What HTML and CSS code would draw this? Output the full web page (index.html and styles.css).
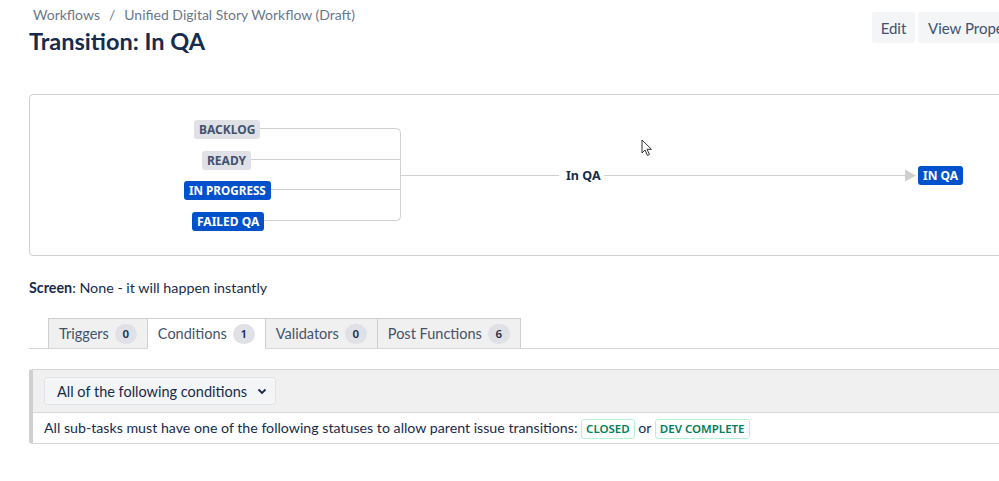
FILE: index.html
```html
<!DOCTYPE html>
<html>
<head>
<meta charset="utf-8">
<link rel="stylesheet" href="styles.css">
</head>
<body>
<div class="page">
  <header class="head">
    <div class="head-left">
      <nav class="crumbs"><a>Workflows</a><span class="sep">/</span><a>Unified Digital Story Workflow (Draft)</a></nav>
      <h1 class="title">Transition: In QA</h1>
    </div>
    <div class="actions">
      <button class="btn">Edit</button>
      <button class="btn">View Properties</button>
    </div>
  </header>

  <section class="diagram">
    <svg class="wires" width="1000" height="162" viewBox="0 0 1000 162">
      <g fill="none" stroke="#d0d0d0" stroke-width="1">
        <path d="M228 34.5 H367.5 Q371.5 34.5 371.5 38.5 V122.5 Q371.5 126.5 367.5 126.5 H230"/>
        <path d="M219 65.5 H371.5"/>
        <path d="M239 95.5 H371.5"/>
        <path d="M371.5 81.5 H530"/>
        <path d="M575 81.5 H877"/>
      </g>
      <polygon points="876,75.5 887,81.5 876,87.5" fill="#cfcfcf"/>
    </svg>
    <span class="loz gray node" style="left:164px;top:25px">BACKLOG</span>
    <span class="loz gray node" style="left:172px;top:56px">READY</span>
    <span class="loz blue node" style="left:154px;top:86px">IN PROGRESS</span>
    <span class="loz blue node" style="left:162px;top:117px">FAILED QA</span>
    <span class="edge-label">In QA</span>
    <span class="loz blue node" style="left:888px;top:71px">IN QA</span>
    <svg class="cursor" width="13" height="18" viewBox="0 0 13 18">
      <path d="M1 1 V14 L4 11 L6.5 16.5 L8.5 15.5 L6 10.3 H10.5 Z" fill="#fff" stroke="#333" stroke-width="1"/>
    </svg>
  </section>

  <p class="screen"><b>Screen</b>: None - it will happen instantly</p>

  <div class="tabs">
    <div class="tab">Triggers <span class="count">0</span></div>
    <div class="tab active">Conditions <span class="count">1</span></div>
    <div class="tab">Validators <span class="count">0</span></div>
    <div class="tab">Post Functions <span class="count">6</span></div>
  </div>

  <section class="conds">
    <div class="conds-head">
      <div class="select"><span>All of the following conditions</span>
        <svg width="10" height="7" viewBox="0 0 10 7"><path d="M1.5 1.5 L5 5 L8.5 1.5" fill="none" stroke="#172b4d" stroke-width="1.8"/></svg>
      </div>
    </div>
    <div class="cond-row">All sub-tasks must have one of the following statuses to allow parent issue transitions: <span class="loz green">CLOSED</span> or <span class="loz green">DEV COMPLETE</span></div>
  </section>
</div>
</body>
</html>
```
FILE: styles.css
```css
html, body { margin: 0; padding: 0; background: #fff; overflow: hidden; }
body {
  font-family: Lato, "Noto Sans", "Liberation Sans", sans-serif;
  color: #172b4d;
  font-size: 14px;
}
.page { width: 1100px; padding: 0 0 0 29px; box-sizing: border-box; }
.head { display: flex; justify-content: space-between; align-items: flex-start; width: 1049px; padding-top: 5px; }
.crumbs { font-size: 14px; color: #6b778c; padding-left: 4px; line-height: 20px; }
.crumbs .sep { margin: 0 9px; }
.title { margin: 1px 0 0; font-size: 23.5px; font-weight: 700; line-height: 30px; color: #172b4d; }
.actions { display: flex; gap: 3px; margin-top: 7px; }
.btn {
  font-family: inherit; font-size: 15px; color: #42526e; background: #f4f5f7;
  border: none; border-radius: 3px; height: 31px; padding: 0 10px;
}
.actions .btn:first-child { width: 43px; padding: 0; }
.actions .btn:last-child { width: 160px; text-align: left; }

.diagram {
  position: relative; margin-top: 38px; height: 162px; width: 1050px;
  border: 1px solid #cfcfcf; border-radius: 4px; box-sizing: border-box;
}
.wires { position: absolute; left: -1px; top: -1px; }
.node { position: absolute; }
.loz {
  display: inline-block; font-family: "Noto Sans", sans-serif; font-size: 12px; font-weight: 700; line-height: 19px;
  padding: 0 5px; border-radius: 3px; text-transform: uppercase;
}
.node.blue:nth-of-type(3) { font-size: 11.7px; }
.gray { background: #dfe1e6; color: #42526e; }
.blue { background: #0052cc; color: #fff; }
.edge-label { position: absolute; left: 536px; top: 72px; font-family: "Noto Sans", sans-serif; font-size: 12.5px; font-weight: 700; color: #172b4d; }
.cursor { position: absolute; left: 611px; top: 44px; }

.screen { margin: 22px 0 0; font-size: 14.3px; line-height: 20px; }
.tabs {
  display: flex; margin-top: 20px; padding-left: 19px;
  border-bottom: 1px solid #d6d6d6; width: 1050px; box-sizing: border-box;
}
.tab {
  display: flex; align-items: center; gap: 6px; height: 30px; box-sizing: border-box;
  padding: 0 10px; background: #f0f0f0; border: 1px solid #cfcfcf; border-bottom: none;
  margin-bottom: -1px; margin-left: -1px; font-size: 14.5px; color: #42526e;
}
.tab:first-child { margin-left: 0; }
.tab.active { background: #fff; height: 31px; border-bottom: 1px solid #fff; }
.count {
  display: inline-block; min-width: 22px; height: 20px; line-height: 20px; border-radius: 10px;
  background: #dfe1e6; color: #172b4d; font-size: 11.5px; font-weight: 600; text-align: center;
  font-family: "Noto Sans", sans-serif;
}

.conds {
  margin-top: 20px; width: 1050px; box-sizing: border-box;
  border: 1px solid #d6d6d6; border-left: 4px solid #cfcfcf; border-radius: 3px 0 0 3px;
}
.conds-head { background: #f0f0f0; padding: 7px 11px; border-bottom: 1px solid #d6d6d6; }
.select {
  display: flex; align-items: center; justify-content: space-between;
  width: 232px; height: 28px; box-sizing: border-box; padding: 0 8px 0 12px;
  background: #f4f5f7; border: 1px solid #e2e4e9; border-radius: 3px;
  font-size: 14.5px; color: #172b4d; white-space: nowrap;
}
.cond-row { padding: 5px 11px 4px 11px; font-size: 14.2px; line-height: 20px; color: #172b4d; }
.green { background: #fff; color: #00805a; border: 1px solid #b3f2d3; line-height: 18px; padding: 0 4px; font-size: 11.5px; font-weight: 600; }
```
